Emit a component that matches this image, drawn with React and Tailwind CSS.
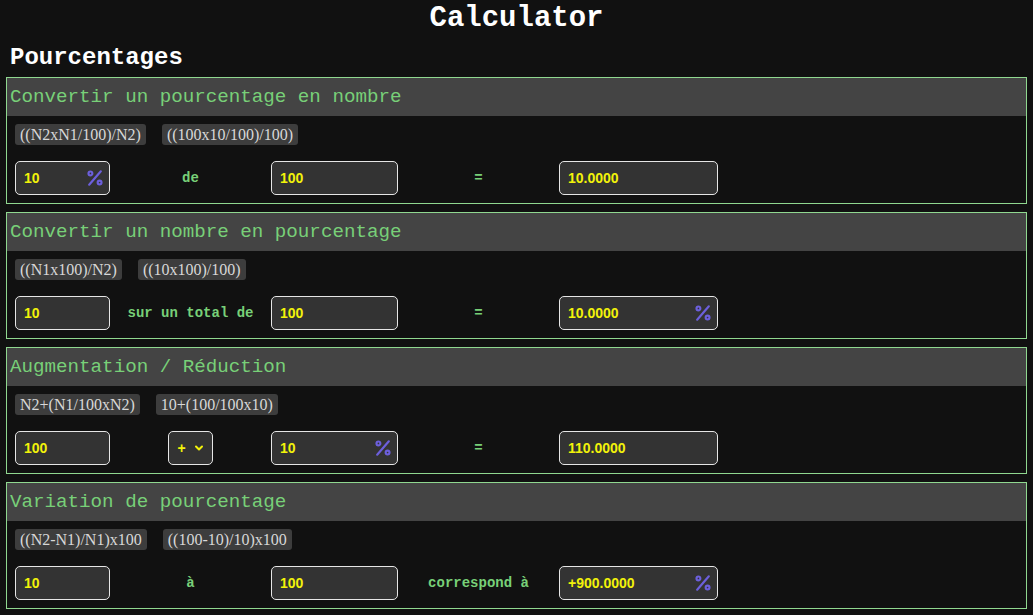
import React from 'react';

const PercentIcon = () => (
  <svg width="20" height="20" viewBox="0 0 24 24" fill="none" stroke="#6c5fdc" strokeWidth="2.6" strokeLinecap="round">
    <line x1="19" y1="4" x2="5" y2="20" />
    <circle cx="6.5" cy="6.5" r="2.3" />
    <circle cx="17.5" cy="17.5" r="2.3" />
  </svg>
);

const Field = ({ value, width, percent }) => (
  <div
    className={`${width} h-[34px] shrink-0 flex items-center justify-between pl-[8px] pr-[4px] bg-[#333] border border-[#e6e6e6] rounded-[5px] text-[14px] font-bold text-[#f2f20a] font-['Liberation_Sans',Arial,sans-serif]`}
  >
    <span>{value}</span>
    {percent && <PercentIcon />}
  </div>
);

const Label = ({ children }) => (
  <div className="w-[161px] shrink-0 text-center text-[14px] font-bold text-[#78d078] font-['Liberation_Mono','Courier_New',monospace]">
    {children}
  </div>
);

const Badge = ({ children }) => (
  <span className="h-[21px] px-[5px] flex items-center rounded-[3px] bg-[#3d3d3d] text-[16px] text-[#d8d8d8] font-['Liberation_Serif',serif]">
    {children}
  </span>
);

const Section = ({ title, formulas, children }) => (
  <div className="mx-[6px] mb-[8px] border border-[#90d890]">
    <div className="h-[38px] flex items-center pl-[3px] bg-[#444] text-[19.2px] text-[#78d078] font-['Liberation_Mono','Courier_New',monospace]">
      {title}
    </div>
    <div className="flex gap-[16px] pl-[8px] mt-[8px]">
      {formulas.map((f) => (
        <Badge key={f}>{f}</Badge>
      ))}
    </div>
    <div className="flex items-center pl-[8px] mt-[16px] mb-[8px]">{children}</div>
  </div>
);

export default function App() {
  return (
    <div className="min-h-[615px] bg-[#111] text-white pb-[1px]">
      <h1 className="h-[38px] pt-[3px] text-center text-[29px] font-bold leading-[32px] font-['Liberation_Mono','Courier_New',monospace]">
        Calculator
      </h1>
      <h2 className="h-[39px] pl-[10px] pt-[4px] text-[24px] font-bold leading-[32px] font-['Liberation_Mono','Courier_New',monospace]">
        Pourcentages
      </h2>

      <Section title="Convertir un pourcentage en nombre" formulas={['((N2xN1/100)/N2)', '((100x10/100)/100)']}>
        <Field value="10" width="w-[95px]" percent />
        <Label>de</Label>
        <Field value="100" width="w-[127px]" />
        <Label>=</Label>
        <Field value="10.0000" width="w-[159px]" />
      </Section>

      <Section title="Convertir un nombre en pourcentage" formulas={['((N1x100)/N2)', '((10x100)/100)']}>
        <Field value="10" width="w-[95px]" />
        <Label>sur un total de</Label>
        <Field value="100" width="w-[127px]" />
        <Label>=</Label>
        <Field value="10.0000" width="w-[159px]" percent />
      </Section>

      <Section title="Augmentation / Réduction" formulas={['N2+(N1/100xN2)', '10+(100/100x10)']}>
        <Field value="100" width="w-[95px]" />
        <div className="w-[161px] shrink-0 flex justify-center">
          <div className="w-[45px] h-[34px] flex items-center justify-center gap-[8px] bg-[#333] border border-[#e6e6e6] rounded-[5px] text-[14px] font-bold text-[#f2f20a] font-['Liberation_Sans',Arial,sans-serif]">
            <span>+</span>
            <svg width="10" height="8" viewBox="0 0 10 8" fill="none" stroke="#f2f20a" strokeWidth="2" strokeLinecap="round" strokeLinejoin="round">
              <polyline points="2,2.5 5,5.5 8,2.5" />
            </svg>
          </div>
        </div>
        <Field value="10" width="w-[127px]" percent />
        <Label>=</Label>
        <Field value="110.0000" width="w-[159px]" />
      </Section>

      <Section title="Variation de pourcentage" formulas={['((N2-N1)/N1)x100', '((100-10)/10)x100']}>
        <Field value="10" width="w-[95px]" />
        <Label>à</Label>
        <Field value="100" width="w-[127px]" />
        <Label>correspond à</Label>
        <Field value="+900.0000" width="w-[159px]" percent />
      </Section>
    </div>
  );
}
